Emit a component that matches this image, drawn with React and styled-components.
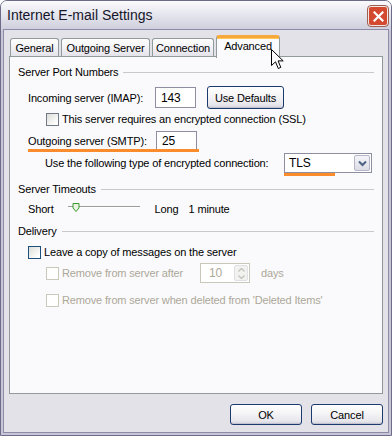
import styled, { createGlobalStyle, css } from "styled-components";

const GlobalStyle = createGlobalStyle`
  body {
    margin: 0;
    background: #ffffff;
    font-family: "Liberation Sans", Arial, sans-serif;
    font-size: 11px;
    letter-spacing: -0.15px;
    color: #000;
  }
`;

const Window = styled.div`
  position: relative;
  width: 392px;
  height: 436px;
  box-sizing: border-box;
  border: 1px solid #6c6c88;
  border-radius: 7px 7px 0 0;
  background: linear-gradient(#f6f6fa, #d4d4e0 28px, #c6c6d6 30px, #c6c6d6);
  display: flex;
  flex-direction: column;
  overflow: hidden;
`;

const TitleBar = styled.div`
  height: 28px;
  flex: none;
  display: flex;
  align-items: center;
  justify-content: space-between;
  padding: 0 3px 0 6px;
  background: linear-gradient(#fbfbfd, #e9e9f1 40%, #d8d8e4 80%, #cfcfdd);
`;

const Title = styled.span`
  font-size: 14px;
  letter-spacing: 0;
  color: #16162a;
`;

const CloseButton = styled.div`
  width: 20px;
  height: 20px;
  margin-top: 2px;
  box-sizing: border-box;
  border: 1px solid #f4e8e6;
  outline: 1px solid #9c5f52;
  border-radius: 3px;
  background: #d44a31;
  display: flex;
  align-items: center;
  justify-content: center;
`;

const Body = styled.div`
  flex: 1;
  margin: 0 2px 2px;
  border: 1px solid #8c8ca8;
  background: #e3e2e9;
  padding: 5px 5px 7px 5px;
  display: flex;
  flex-direction: column;
`;

const TabStrip = styled.div`
  height: 21px;
  display: flex;
  align-items: flex-end;
  gap: 2px;
  padding-left: 1px;
`;

const Tab = styled.div`
  width: ${(p) => p.$w}px;
  height: 18px;
  box-sizing: border-box;
  border: 1px solid #919b9c;
  border-bottom: none;
  border-radius: 3px 3px 0 0;
  background: linear-gradient(#ffffff, #f3f3f6 50%, #e4e3ea);
  display: flex;
  align-items: center;
  justify-content: center;
  color: #000;
  ${(p) =>
    p.$active &&
    css`
      position: relative;
      z-index: 1;
      height: 23px;
      margin-bottom: -2px;
      border-top: 3px solid #f7a93b;
      box-shadow: inset 0 1px 0 #ffc85a;
      background: #fbfbfd;
      align-items: flex-start;
      padding-top: 2px;
    `}
`;

const Panel = styled.div`
  flex: 1;
  border: 1px solid #919b9c;
  border-right-color: #8e9696;
  background: #fafafc;
  padding: 8px 8px 0 8px;
  display: flex;
  flex-direction: column;
`;

const GroupHeader = styled.div`
  display: flex;
  align-items: center;
  height: 14px;
  margin-top: ${(p) => p.$top || 0}px;
  gap: 5px;

  &::after {
    content: "";
    flex: 1;
    height: 1px;
    background: #c9c9cc;
  }
`;

const Row = styled.div`
  display: flex;
  align-items: center;
  height: ${(p) => p.$h}px;
  margin-top: ${(p) => p.$top}px;
  padding-left: ${(p) => p.$indent}px;
  color: ${(p) => (p.$disabled ? "#aca899" : "#000")};
`;

const Label = styled.span`
  width: ${(p) => p.$w}px;
  flex: none;
`;

const Units = styled.span`
  margin-left: 11px;
`;

const TextBox = styled.div`
  width: ${(p) => p.$w}px;
  height: ${(p) => p.$h}px;
  box-sizing: border-box;
  border: 1px solid #8d8fa0;
  background: #fff;
  display: flex;
  align-items: center;
  padding-left: 5px;
  font-size: 12px;
`;

const Button = styled.div`
  width: ${(p) => p.$w}px;
  height: ${(p) => p.$h}px;
  margin-left: ${(p) => p.$left || 0}px;
  box-sizing: border-box;
  border: 1px solid #1c3a6e;
  border-radius: 3px;
  background: linear-gradient(#ffffff, #f4f4f6 45%, #e6e6ec 85%, #cfcfd9);
  box-shadow: inset 0 -1px 0 #c3c3cf;
  display: flex;
  align-items: center;
  justify-content: center;
  color: #000;
`;

const Check = styled.span`
  width: 13px;
  height: 13px;
  box-sizing: border-box;
  flex: none;
  margin-right: 3px;
  border: 1px solid
    ${(p) => (p.$disabled ? "#cac8bb" : p.$dark ? "#1c4f7c" : "#6f7a86")};
  background: ${(p) =>
    p.$disabled ? "#ffffff" : "linear-gradient(135deg, #dcdcd7, #ffffff 85%)"};
`;

const Marked = styled.span`
  position: relative;
  display: flex;
  align-items: center;

  &::after {
    content: "";
    position: absolute;
    left: 0;
    bottom: ${(p) => p.$bottom}px;
    width: ${(p) => p.$w}px;
    height: 3px;
    background: #fb8c2e;
  }
`;

const Select = styled.div`
  width: 88px;
  height: 20px;
  box-sizing: border-box;
  border: 1px solid #8d8fa0;
  background: #fff;
  display: flex;
  align-items: center;
  justify-content: space-between;
  padding: 0 1px 0 4px;
  font-size: 12px;
`;

const DropButton = styled.span`
  width: 16px;
  height: 16px;
  box-sizing: border-box;
  border: 1px solid #b6b6c8;
  border-radius: 2px;
  background: linear-gradient(#f4f4f8, #dcdce6);
  display: flex;
  align-items: center;
  justify-content: center;
`;

const Slider = styled.div`
  position: relative;
  width: 72px;
  height: 10px;
  margin: 4px 15px 0 14px;
  border-top: 1px solid #9c9c9c;
  box-shadow: inset 0 1px 0 #ffffff;
`;

const Thumb = styled.svg`
  position: absolute;
  left: 4px;
  top: -4px;
`;

const Spin = styled.div`
  width: 50px;
  height: 20px;
  box-sizing: border-box;
  border: 1px solid #c9c7ba;
  background: #fff;
  display: flex;
  align-items: center;
  justify-content: space-between;
  padding: 0 1px 0 8px;
  color: #aca899;
  font-size: 12px;
`;

const SpinButtons = styled.span`
  width: 14px;
  height: 16px;
  box-sizing: border-box;
  border: 1px solid #e0dfe3;
  border-radius: 2px;
  background: #f2f2f0;
  display: flex;
  flex-direction: column;
  align-items: center;
  justify-content: space-around;
`;

const Footer = styled.div`
  display: flex;
  justify-content: flex-end;
  gap: 9px;
  margin-top: 10px;
`;

const Cursor = styled.svg`
  position: absolute;
  left: 270px;
  top: 48px;
  z-index: 5;
`;

export default function App() {
  return (
    <>
      <GlobalStyle />
      <Window>
        <TitleBar>
          <Title>Internet E-mail Settings</Title>
          <CloseButton>
            <svg width="11" height="11" viewBox="0 0 11 11">
              <path d="M1.5 1.5 L9.5 9.5 M9.5 1.5 L1.5 9.5" stroke="#ffffff" strokeWidth="2.2" strokeLinecap="square" />
            </svg>
          </CloseButton>
        </TitleBar>
        <Body>
          <TabStrip>
            <Tab $w={49}>General</Tab>
            <Tab $w={89}>Outgoing Server</Tab>
            <Tab $w={62}>Connection</Tab>
            <Tab $w={64} $active>Advanced</Tab>
          </TabStrip>
          <Panel>
            <GroupHeader>Server Port Numbers</GroupHeader>
            <Row $h={23} $top={7} $indent={10}>
              <Label $w={127}>Incoming server (IMAP):</Label>
              <TextBox $w={41} $h={21}>143</TextBox>
              <Button $w={77} $h={23} $left={11}>Use Defaults</Button>
            </Row>
            <Row $h={16} $top={2} $indent={28}>
              <Check />
              This server requires an encrypted connection (SSL)
            </Row>
            <Row $h={21} $top={3} $indent={10}>
              <Marked $w={171} $bottom={-1}>
                <Label $w={128}>Outgoing server (SMTP):</Label>
                <TextBox $w={41} $h={20}>25</TextBox>
              </Marked>
            </Row>
            <Row $h={20} $top={2} $indent={27}>
              <Label $w={239}>Use the following type of encrypted connection:</Label>
              <Marked $w={51} $bottom={-3}>
                <Select>
                  TLS
                  <DropButton>
                    <svg width="9" height="7" viewBox="0 0 9 7">
                      <path d="M1 1.5 L4.5 5 L8 1.5" fill="none" stroke="#4d6185" strokeWidth="2" />
                    </svg>
                  </DropButton>
                </Select>
              </Marked>
            </Row>
            <GroupHeader $top={9}>Server Timeouts</GroupHeader>
            <Row $h={16} $top={5} $indent={10}>
              Short
              <Slider>
                <Thumb width="8" height="9" viewBox="0 0 8 9">
                  <path d="M1 0.5 H7 V5 L4 8.5 L1 5 Z" fill="#e8f4e0" stroke="#3c9a32" />
                </Thumb>
              </Slider>
              <Label $w={34}>Long</Label>1 minute
            </Row>
            <GroupHeader $top={7}>Delivery</GroupHeader>
            <Row $h={16} $top={6} $indent={10}>
              <Check $dark />
              Leave a copy of messages on the server
            </Row>
            <Row $h={20} $top={3} $indent={28} $disabled>
              <Check $disabled />
              <Label $w={138}>Remove from server after</Label>
              <Spin>
                10
                <SpinButtons>
                  <svg width="7" height="4" viewBox="0 0 7 4">
                    <path d="M0.5 3.5 L3.5 0.5 L6.5 3.5" fill="none" stroke="#c4c3bc" strokeWidth="1.4" />
                  </svg>
                  <svg width="7" height="4" viewBox="0 0 7 4">
                    <path d="M0.5 0.5 L3.5 3.5 L6.5 0.5" fill="none" stroke="#c4c3bc" strokeWidth="1.4" />
                  </svg>
                </SpinButtons>
              </Spin>
              <Units>days</Units>
            </Row>
            <Row $h={16} $top={9} $indent={28} $disabled>
              <Check $disabled />
              Remove from server when deleted from 'Deleted Items'
            </Row>
          </Panel>
          <Footer>
            <Button $w={72} $h={21}>OK</Button>
            <Button $w={72} $h={21}>Cancel</Button>
          </Footer>
        </Body>
        <Cursor width="13" height="21" viewBox="0 0 13 21">
          <path d="M0.5 0.5 V16.5 L4.5 12.8 L7.3 19.5 L9.8 18.4 L7.1 11.9 H12.2 Z" fill="#fff" stroke="#000" strokeWidth="1" />
        </Cursor>
      </Window>
    </>
  );
}
